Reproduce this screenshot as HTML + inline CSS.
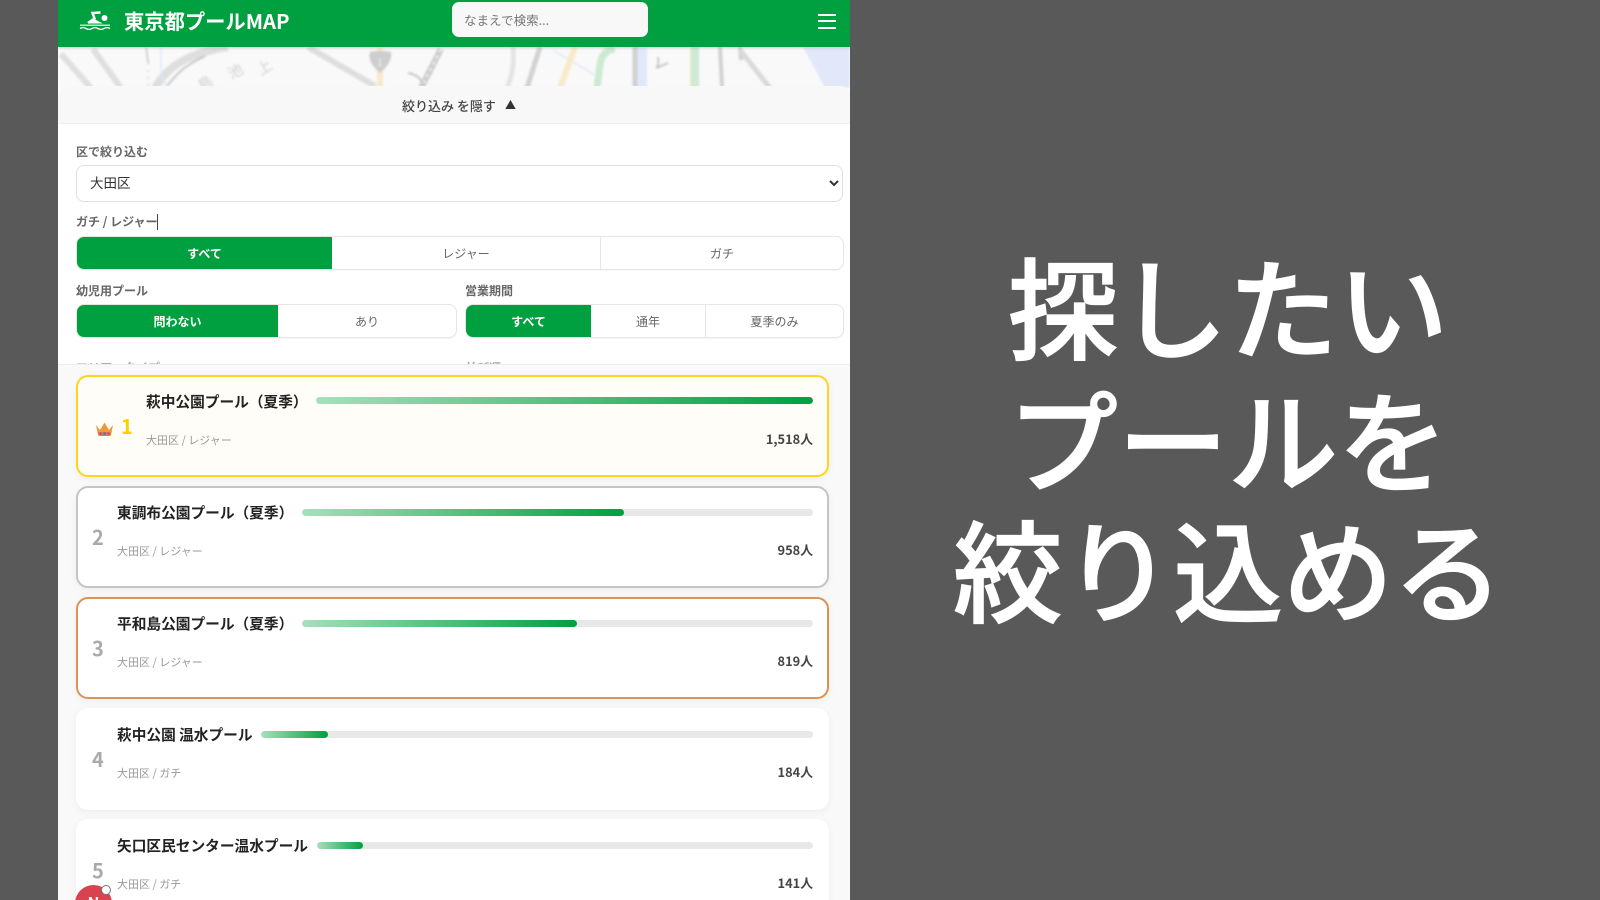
<!DOCTYPE html>
<html lang="ja">
<head>
<meta charset="utf-8">
<title>東京都プールMAP</title>
<style>
*{box-sizing:border-box;margin:0;padding:0}
html,body{width:1600px;height:900px;overflow:hidden;background:#595959;font-family:"Noto Sans CJK JP","Liberation Sans",sans-serif}
.a{position:absolute}
#panel{position:absolute;left:58px;top:0;width:792px;height:900px;background:#fff;overflow:hidden}
#w{position:absolute;left:-58px;top:0;width:1600px;height:900px;filter:blur(.35px)}
.t{position:absolute;white-space:nowrap;line-height:1}
.lab{font-size:12px;font-weight:700;color:#666}
.seg{position:absolute;height:34px;border:1px solid #e6e6e6;border-radius:8px;background:#fff;overflow:hidden;box-shadow:0 1px 1px rgba(0,0,0,.04)}
.seg div{position:absolute;top:0;bottom:0;display:flex;align-items:center;justify-content:center;font-size:12px;color:#666;border-right:1px solid #e6e6e6}
.seg div.on{background:#00a040;color:#fff;font-weight:700;border-right:none}
.seg div:last-child{border-right:none}
.card{position:absolute;left:76px;width:753px;height:102px;background:#fff;border-radius:12px;box-shadow:0 2px 8px rgba(0,0,0,.05)}
.bar{position:absolute;height:7px;background:#e8e8e8;border-radius:4px;overflow:hidden}
.bar i{display:block;height:100%;border-radius:4px;background:linear-gradient(90deg,#a8dfbb,#00a040)}
.name{font-size:14.700px;font-weight:700;color:#222}
.sub{font-size:11px;color:#999}
.cnt{font-size:12.800px;font-weight:700;color:#444}
.rk{font-size:20px;font-weight:700;color:#aaa}
#big div{position:absolute;left:853px;width:750px;text-align:center;color:#fff;font-weight:500;-webkit-text-stroke:1.300px #fff;font-size:110px;line-height:132px;white-space:nowrap}
</style>
</head>
<body>
<div id="panel"><div id="w">

<!-- map -->
<svg class="a" style="left:58px;top:47px;filter:blur(1px);opacity:.68" width="792" height="41" viewBox="58 47 792 41">
<rect x="58" y="47" width="792" height="41" fill="#f7f7f7"/>
<polygon points="803,47 825,88 850,88 850,47" fill="#d5dcf6"/>
<rect x="637" y="47" width="10" height="41" fill="#d5dcf6"/>
<g fill="none" stroke-linecap="butt">
<path d="M61 54 91 88M93 49 121 88" stroke="#d0d0d0" stroke-width="6"/>
<path d="M155 88C170 62 195 52 228 47" stroke="#cfcfcf" stroke-width="8"/>
<path d="M166 88C178 70 192 62 205 56" stroke="#aaa" stroke-width="2"/>
<path d="M308 47 375 86" stroke="#cfcfcf" stroke-width="6"/>
<path d="M380 47V88" stroke="#f5dfb0" stroke-width="6"/>
<path d="M441 49 421 88" stroke="#b0b0b0" stroke-width="6"/>
<path d="M441 49 421 88" stroke="#eee" stroke-width="2" stroke-dasharray="4 3"/>
<path d="M408 73C416 74 420 78 423 84" stroke="#aaa" stroke-width="2"/>
<path d="M146 47C148 54 146 58 149 64" stroke="#aaa" stroke-width="1.500"/>
<path d="M148 70V88" stroke="#bbb" stroke-width="1.500" stroke-dasharray="2 5"/>
<path d="M161 47V75Q162 82 170 88" stroke="#cfdcf5" stroke-width="1.500"/>
<path d="M513 47Q515 70 507 88" stroke="#d8d8d8" stroke-width="5"/>
<path d="M540 47 527 88" stroke="#bcbcbc" stroke-width="5"/>
<path d="M553 50 595 75" stroke="#cfdcf5" stroke-width="1.500"/>
<path d="M575 47 560 88" stroke="#f8e0b0" stroke-width="6"/>
<path d="M615 49Q602 50 600 65L597 88" stroke="#b5e0bd" stroke-width="7"/>
<path d="M635 47V88" stroke="#bcbcbc" stroke-width="5"/>
<path d="M691 47V88" stroke="#f5dfb0" stroke-width="2"/>
<path d="M695 47V88" stroke="#b5e0bd" stroke-width="8"/>
<path d="M720 47 722 88M740 47 741 60" stroke="#bcbcbc" stroke-width="4"/>
<path d="M740 50 770 88" stroke="#c8c8c8" stroke-width="5"/>
<path d="M658 57Q659 66 656 68L668 63" stroke="#999" stroke-width="1.500"/>
</g>
<path d="M370 52Q380 50 391 52Q393 62 380 73Q367 62 370 52Z" fill="#b5b5b5"/>
<text x="380" y="66" font-size="10" fill="#eee" text-anchor="middle">1</text>
<g fill="#bbb" font-size="15" text-anchor="middle">
<text transform="translate(267,72) rotate(-30)">上</text>
<text transform="translate(238,76) rotate(-30)">池</text>
<text transform="translate(208,88) rotate(-30)">島</text>
</g>
</svg>

<!-- header -->
<div class="a" style="left:58px;top:0;width:792px;height:47px;background:#00a040;box-shadow:0 1px 3px rgba(0,0,0,.2)"></div>
<svg class="a" style="left:79px;top:9px" width="32" height="22" viewBox="0 0 32 22">
<circle cx="25.500" cy="9" r="3" fill="#fff"/>
<path d="M21.500 3.500 13.500 4 15.500 9.500 9 14" fill="none" stroke="#fff" stroke-width="2.500"/>
<path d="M9 14.500 16 10.500 20 12.500 24 14.500Z" fill="#fff"/>
<path d="M1 16.200H31" stroke="#fff" stroke-width="1.200"/>
<path d="M1 19.500Q4 17.800 7 19.500T13 19.500T19 19.500T25 19.500T31 19.500" fill="none" stroke="#fff" stroke-width="1.300"/>
</svg>
<div class="t" style="left:124px;top:10px;font-size:20.300px;font-weight:700;color:#fff">東京都プールMAP</div>
<div class="a" style="left:452px;top:2px;width:196px;height:35px;background:#f8f8f8;border-radius:7px"></div>
<div class="t" style="left:464px;top:14px;font-size:12.500px;color:#777">なまえで検索...</div>
<div class="a" style="left:818px;top:14px;width:18px;height:2px;background:#fff"></div>
<div class="a" style="left:818px;top:20px;width:18px;height:2px;background:#fff"></div>
<div class="a" style="left:818px;top:27px;width:18px;height:2px;background:#fff"></div>

<!-- filter panel -->
<div class="a" style="left:58px;top:86px;width:792px;height:280px;background:#fff;border-radius:10px 10px 0 0"></div>
<div class="a" style="left:58px;top:86px;width:792px;height:38px;background:#f8f8f8;border-bottom:1px solid #f0f0f0;border-radius:10px 10px 0 0"></div>
<div class="t" style="left:402px;top:99px;font-size:13px;font-weight:500;color:#444">絞り込み を隠す</div>
<div class="t" style="left:505px;top:100px;font-size:11px;color:#333">▲</div>

<div class="t lab" style="left:76px;top:146px">区で絞り込む</div>
<select class="a" style="left:76px;top:165px;width:767px;height:37px;border:1px solid #e0e0e0;border-radius:8px;background:#fff;padding:0 0 3px 9px;font:13.500px 'Noto Sans CJK JP','Liberation Sans',sans-serif;color:#333"><option>大田区</option></select>

<div class="t lab" style="left:76px;top:216px">ガチ / レジャー</div>
<div class="a" style="left:157px;top:214px;width:1px;height:16px;background:#444"></div>
<div class="seg" style="left:76px;top:236px;width:768px">
<div class="on" style="left:0;width:255px">すべて</div>
<div style="left:255px;width:269px">レジャー</div>
<div style="left:524px;right:0">ガチ</div>
</div>

<div class="t lab" style="left:76px;top:285px">幼児用プール</div>
<div class="t lab" style="left:465px;top:285px">営業期間</div>
<div class="seg" style="left:76px;top:304px;width:381px">
<div class="on" style="left:0;width:201px">問わない</div>
<div style="left:201px;right:0">あり</div>
</div>
<div class="seg" style="left:465px;top:304px;width:379px">
<div class="on" style="left:0;width:125px">すべて</div>
<div style="left:125px;width:115px">通年</div>
<div style="left:240px;right:0">夏季のみ</div>
</div>
<div class="t lab" style="left:76px;top:362px;color:#aaa">エリア・タイプ</div>
<div class="t lab" style="left:465px;top:362px;color:#aaa">並び順</div>

<!-- list -->
<div class="a" style="left:58px;top:364px;width:792px;height:536px;background:#f9f9f9;border-top:1px solid #eee"></div>

<div class="card" style="top:375px;background:#fffdf8;border:2px solid #ffd41f"></div>
<svg class="a" style="left:95px;top:420px" width="19" height="18" viewBox="0 0 19 18">
<path d="M1 5 5 10 9.500 2.500 14 10 18 5 16 15H3Z" fill="#ec9a3c"/>
<path d="M3 12H16L15.500 16H3.500Z" fill="#e0785a"/>
<circle cx="9.500" cy="13.500" r="1.400" fill="#2f7fe0"/><circle cx="5.500" cy="13.500" r="1" fill="#d33"/><circle cx="13.500" cy="13.500" r="1" fill="#d33"/>
</svg>
<div class="t rk" style="left:121px;top:416px;color:#ffd000">1</div>
<div class="t name" style="left:146px;top:395px">萩中公園プール（夏季）</div>
<div class="bar" style="left:316px;top:397px;width:497px"><i style="width:100%"></i></div>
<div class="t sub" style="left:146px;top:435px">大田区 / レジャー</div>
<div class="t cnt" style="right:787px;top:433px">1,518人</div>

<div class="card" style="top:486px;border:2px solid #c4c4c4"></div>
<div class="t rk" style="left:92px;top:527px">2</div>
<div class="t name" style="left:117px;top:506px">東調布公園プール（夏季）</div>
<div class="bar" style="left:302px;top:509px;width:511px"><i style="width:322px"></i></div>
<div class="t sub" style="left:117px;top:546px">大田区 / レジャー</div>
<div class="t cnt" style="right:787px;top:544px">958人</div>

<div class="card" style="top:597px;border:2px solid #da9355"></div>
<div class="t rk" style="left:92px;top:638px">3</div>
<div class="t name" style="left:117px;top:617px">平和島公園プール（夏季）</div>
<div class="bar" style="left:302px;top:620px;width:511px"><i style="width:275px"></i></div>
<div class="t sub" style="left:117px;top:657px">大田区 / レジャー</div>
<div class="t cnt" style="right:787px;top:655px">819人</div>

<div class="card" style="top:708px"></div>
<div class="t rk" style="left:92px;top:749px">4</div>
<div class="t name" style="left:117px;top:728px">萩中公園 温水プール</div>
<div class="bar" style="left:261px;top:731px;width:552px"><i style="width:67px"></i></div>
<div class="t sub" style="left:117px;top:768px">大田区 / ガチ</div>
<div class="t cnt" style="right:787px;top:766px">184人</div>

<div class="card" style="top:819px"></div>
<div class="t rk" style="left:92px;top:860px">5</div>
<div class="t name" style="left:117px;top:839px">矢口区民センター温水プール</div>
<div class="bar" style="left:317px;top:842px;width:496px"><i style="width:46px"></i></div>
<div class="t sub" style="left:117px;top:879px">大田区 / ガチ</div>
<div class="t cnt" style="right:787px;top:877px">141人</div>

<!-- badge -->
<div class="a" style="left:75px;top:885px;width:37px;height:37px;border-radius:50%;background:#d9434f;color:#fff;font-size:16px;font-weight:700;text-align:center;line-height:34px">N</div>
<div class="a" style="left:101px;top:885px;width:10px;height:10px;border-radius:50%;background:#fff;border:1.500px solid #777"></div>
</div></div>

<!-- right headline -->
<div id="big">
<div style="top:237px">探したい</div>
<div style="top:370px">プールを</div>
<div style="top:500px">絞り込める</div>
</div>
</body>
</html>
